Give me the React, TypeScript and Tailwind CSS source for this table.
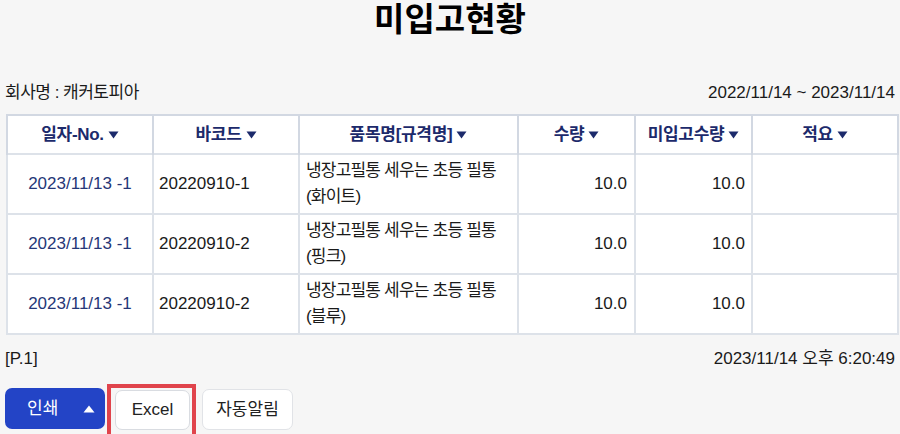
import React from "react";

const Tri = () => (
  <svg width="11" height="8" viewBox="0 0 11 8" className="inline-block ml-[4px] align-[1px]">
    <path d="M0.5 0.5 L10.5 0.5 L5.5 7.5 Z" fill="#1c2a6b" />
  </svg>
);

const rows = [
  { date: "2023/11/13 -1", code: "20220910-1", name: "냉장고필통 세우는 초등 필통 (화이트)" },
  { date: "2023/11/13 -1", code: "20220910-2", name: "냉장고필통 세우는 초등 필통 (핑크)" },
  { date: "2023/11/13 -1", code: "20220910-2", name: "냉장고필통 세우는 초등 필통 (블루)" },
];

const heads = ["일자-No.", "바코드", "품목명[규격명]", "수량", "미입고수량", "적요"];

export default function App() {
  const font = { fontFamily: '"Liberation Sans", "Noto Sans CJK KR", sans-serif' };
  return (
    <div className="w-[900px] h-[434px] bg-[#f6f6f6] overflow-hidden text-[17px] text-[#1a1a1a]" style={font}>
      <div className="h-[40px] leading-[40px] text-center text-[33px] font-bold text-black">
        미입고현황
      </div>
      <div className="mt-[41px] px-[5px] flex justify-between h-[24px] leading-[24px]">
        <div className="tracking-[-0.5px]">회사명 : 캐커토피아</div>
        <div>2022/11/14 ~ 2023/11/14</div>
      </div>
      <div className="mt-[9px] pl-[6px] pr-[3px]">
        <table className="table-fixed border-collapse w-[891px] bg-white">
          <colgroup>
            <col className="w-[146px]" />
            <col className="w-[146px]" />
            <col className="w-[219px]" />
            <col className="w-[117px]" />
            <col className="w-[117px]" />
            <col className="w-[146px]" />
          </colgroup>
          <thead>
            <tr className="h-[39px] text-[#1c2a6b]">
              {heads.map((h) => (
                <th key={h} className="border-2 border-b border-[#d2d8e2] font-bold tracking-[-0.3px]">
                  {h}
                  <Tri />
                </th>
              ))}
            </tr>
          </thead>
          <tbody>
            {rows.map((r, i) => (
              <tr key={i} className="h-[60px]">
                <td className="border-2 border-[#dde2e9] text-center text-[#263777]">{r.date}</td>
                <td className="border-2 border-[#dde2e9] pl-[5px]">{r.code}</td>
                <td className="border-2 border-[#dde2e9] pl-[6px] pr-0 leading-[26px] tracking-[-0.8px] break-keep">
                  {r.name}
                </td>
                <td className="border-2 border-[#dde2e9] text-right pr-[7px]">10.0</td>
                <td className="border-2 border-[#dde2e9] text-right pr-[6px]">10.0</td>
                <td className="border-2 border-[#dde2e9]"></td>
              </tr>
            ))}
          </tbody>
        </table>
      </div>
      <div className="mt-[12px] px-[5px] flex justify-between h-[24px] leading-[24px]">
        <div>[P.1]</div>
        <div>2023/11/14 오후 6:20:49</div>
      </div>
      <div className="mt-[17px] pl-[5px] flex items-start">
        <button className="w-[100px] h-[41px] rounded-[7px] bg-[#2344c6] text-white flex items-center justify-between pl-[22px] pr-[8px]">
          <span>인쇄</span>
          <svg width="12" height="8" viewBox="0 0 12 8" className="mr-[2px]">
            <path d="M6 0.5 L11.5 7.5 L0.5 7.5 Z" fill="#ffffff" />
          </svg>
        </button>
        <div className="relative ml-[10px] mt-[2px]">
          <button className="w-[75px] h-[40px] rounded-[7px] bg-white border border-[#d9dce1] text-[#222]">
            Excel
          </button>
          <div className="absolute left-[-8px] top-[-6px] right-[-6px] bottom-[-10px] border-4 border-[#e0444c] pointer-events-none" />
        </div>
        <button className="ml-[12px] mt-[1px] w-[91px] h-[41px] rounded-[7px] bg-white border border-[#e1e3e7] text-[#222]">
          자동알림
        </button>
      </div>
    </div>
  );
}
